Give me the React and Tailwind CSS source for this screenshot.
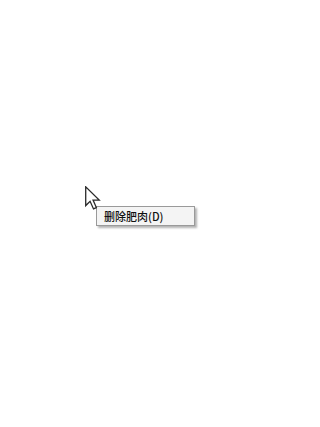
const Cursor = () => (
  <svg width="16" height="24" viewBox="0 0 13.5 20" className="absolute left-[85px] top-[186px]">
    <path
      d="M0.6 0.6 L0.6 16.4 L4.3 12.8 L7.2 19.2 L9.6 18.1 L6.8 11.8 L12 11.8 Z"
      fill="#ffffff"
      stroke="#2a2a2a"
      strokeWidth="1.1"
      strokeLinejoin="miter"
    />
  </svg>
);

const App = () => {
  return (
    <div className="relative w-[240px] h-[427px] bg-white overflow-hidden">
      {/* context menu */}
      <div className="absolute left-[96px] top-[206px] w-[99px] h-[20px] bg-[#f4f4f4] border border-[#9a9a9a] shadow-[2px_2px_2px_rgba(0,0,0,0.3)] flex items-center pl-[7px]">
        <span
          className="text-[11px] leading-none font-medium text-[#111111]"
          style={{ fontFamily: '"Noto Sans CJK SC", "Liberation Sans", sans-serif' }}
        >
          删除肥肉(D)
        </span>
      </div>
      <Cursor />
    </div>
  );
};

export default App;
